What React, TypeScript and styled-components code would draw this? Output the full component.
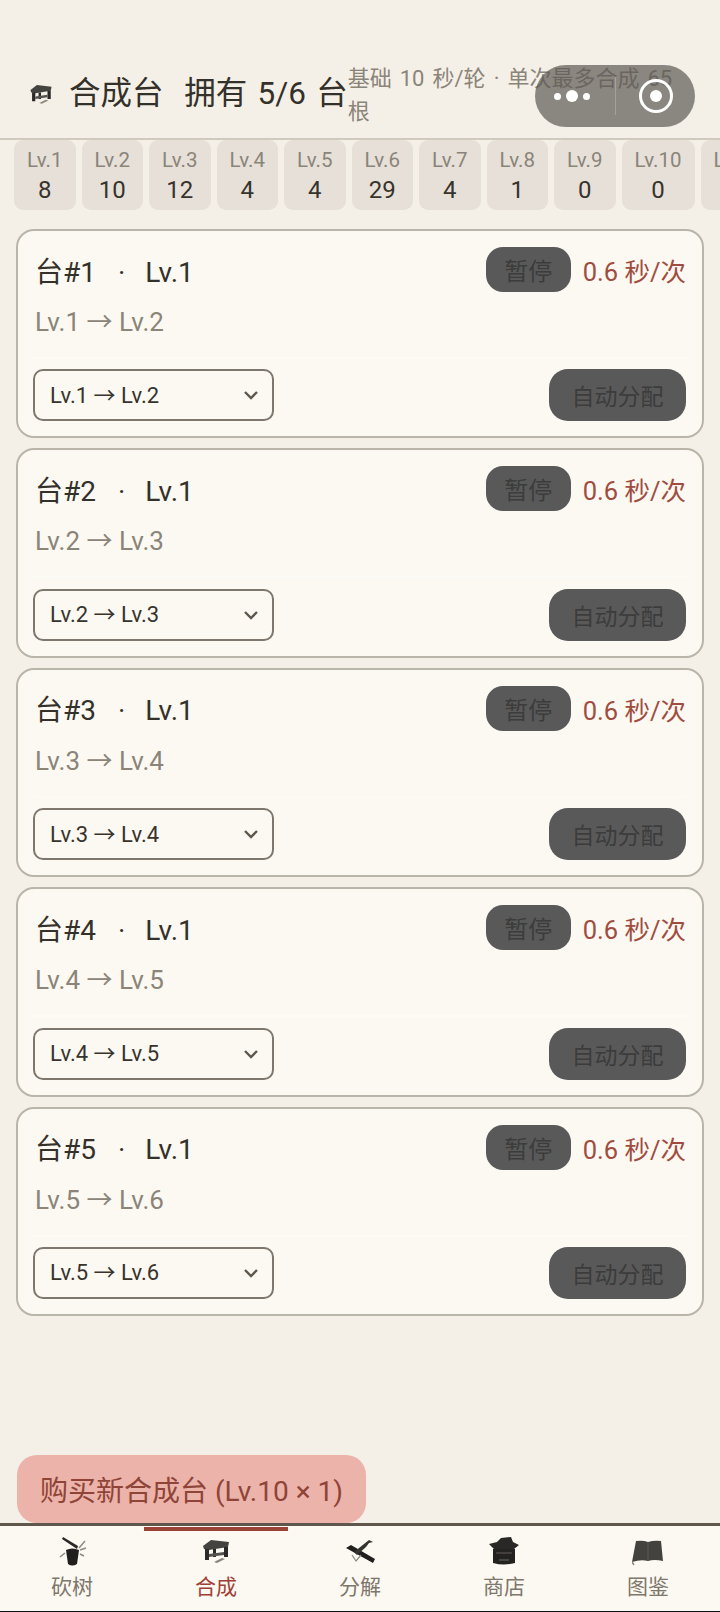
import React from "react";
import styled, { createGlobalStyle } from "styled-components";

const Global = createGlobalStyle`
  html, body { margin: 0; padding: 0; height: 1612px; background: #f4f0e8; }
  #root { height: 1612px; }
  * { box-sizing: border-box; }
  body { font-family: Roboto, "Noto Sans CJK SC", sans-serif; overflow: hidden; }
`;

const Page = styled.div`
  position: relative;
  width: 720px;
  height: 1612px;
  display: flex;
  flex-direction: column;
  background: #f4f0e8;
  border-bottom: 1px solid #111;
`;

const Header = styled.header`
  height: 140px;
  flex: none;
  padding: 64px 24px 0 28px;
  display: flex;
  align-items: flex-start;
  border-bottom: 2px solid #cfc9be;
`;

const TitleIcon = styled.span`
  width: 26px;
  height: 26px;
  margin-top: 17px;
  flex: none;
  display: block;
`;

const Title = styled.h1`
  margin: 1px 0 0 15px;
  flex: none;
  font-size: 31.5px;
  font-weight: 400;
  line-height: 58px;
  word-spacing: 2.5px;
  color: #34302a;
  white-space: pre;
`;

const Subtitle = styled.p`
  margin: -2px 0 0 0;
  font-size: 22px;
  line-height: 33px;
  word-spacing: 2.6px;
  color: #8b8479;
`;

const Capsule = styled.div`
  position: absolute;
  left: 535px;
  top: 65px;
  width: 160px;
  height: 62px;
  border-radius: 31px;
  background: rgba(92, 90, 84, 0.7);
  display: flex;
  align-items: center;
`;

const Dots = styled.div`
  width: 80px;
  padding-right: 6px;
  display: flex;
  align-items: center;
  justify-content: center;
  gap: 5px;
`;

const Dot = styled.i<{ $big?: boolean }>`
  display: block;
  width: ${(p) => (p.$big ? 12 : 7)}px;
  height: ${(p) => (p.$big ? 12 : 7)}px;
  border-radius: 50%;
  background: #fff;
`;

const Divider = styled.div`
  width: 1px;
  height: 38px;
  background: rgba(255, 255, 255, 0.22);
`;

const Ring = styled.div`
  margin-left: 23px;
  width: 34px;
  height: 34px;
  border: 3px solid #fff;
  border-radius: 50%;
  display: flex;
  align-items: center;
  justify-content: center;
  &::after {
    content: "";
    width: 12px;
    height: 12px;
    border-radius: 50%;
    background: #fff;
  }
`;

const Strip = styled.div`
  flex: none;
  height: 71px;
  padding: 0 0 1px 14px;
  display: flex;
  gap: 6px;
  overflow: hidden;
`;

const Chip = styled.div`
  flex: none;
  padding: 8px 13px 0;
  height: 70px;
  border-radius: 9px;
  background: #e6e0d8;
  text-align: center;
`;

const ChipLabel = styled.div`
  font-size: 20.5px;
  line-height: 24px;
  color: #8b8479;
`;

const ChipValue = styled.div`
  margin-top: 2px;
  font-size: 24px;
  line-height: 32px;
  color: #37332d;
`;

const List = styled.main`
  flex: none;
  padding: 18px 16px 0 16px;
  display: flex;
  flex-direction: column;
  gap: 10px;
`;

const Card = styled.section`
  height: 209.4px;
  padding: 16px 16px 15px 15px;
  border: 2px solid #bab5aa;
  border-radius: 18px;
  background: #fcf9f2;
  display: flex;
  flex-direction: column;
`;

const TopRow = styled.div`
  display: flex;
  align-items: center;
  height: 45px;
`;

const CardTitle = styled.div`
  flex: 1;
  font-size: 28px;
  padding-left: 2px;
  color: #34302a;
  white-space: pre;
`;

const TitleSep = styled.span`
  margin: 0 20px 0 22px;
`;

const PauseButton = styled.div`
  width: 85px;
  height: 45px;
  border-radius: 17px;
  background: #595959;
  color: #3c3c3c;
  font-size: 24px;
  display: flex;
  align-items: center;
  justify-content: center;
`;

const Speed = styled.div`
  margin-left: 12px;
  font-size: 25.5px;
  color: #a04c40;
`;

const Recipe = styled.div`
  margin-top: 11px;
  padding-left: 2px;
  font-size: 26px;
  line-height: 38px;
  color: #8b8479;
`;

const Track = styled.div`
  margin-top: 16px;
  height: 2px;
  background: #fdfbf6;
`;

const BottomRow = styled.div`
  margin-top: auto;
  display: flex;
  align-items: center;
  justify-content: space-between;
`;

const SelectWrap = styled.div`
  position: relative;
  width: 241px;
  height: 52px;
`;

const Select = styled.select`
  width: 100%;
  height: 100%;
  appearance: none;
  padding: 0 0 0 15px;
  border: 2px solid #7d776d;
  border-radius: 10px;
  background: transparent;
  color: #37332d;
  font: 22px Roboto, "Noto Sans CJK SC", sans-serif;
`;

const Chevron = styled.svg`
  position: absolute;
  right: 15px;
  top: 20px;
  width: 16px;
  height: 12px;
  pointer-events: none;
`;

const AutoButton = styled.div`
  width: 137px;
  height: 52px;
  border-radius: 19px;
  background: #595959;
  color: #3c3c3c;
  font-size: 23px;
  display: flex;
  align-items: center;
  justify-content: center;
`;

const Spacer = styled.div`
  flex: 1;
`;

const BuyButton = styled.div`
  flex: none;
  width: 349px;
  height: 68px;
  margin-left: 17px;
  border-radius: 20px;
  background: #ebb3a9;
  color: #8f4438;
  font-size: 28px;
  display: flex;
  align-items: center;
  justify-content: center;
`;

const TabBar = styled.nav`
  flex: none;
  height: 88px;
  border-top: 3px solid #5f574b;
  background: #fcf9f2;
  display: grid;
  grid-template-columns: repeat(5, 144px);
`;

const Tab = styled.div<{ $active?: boolean }>`
  position: relative;
  display: flex;
  flex-direction: column;
  align-items: center;
  padding-top: 9px;
  font-size: 21px;
  line-height: 30px;
  color: ${(p) => (p.$active ? "#a04034" : "#7e776c")};
  &::before {
    content: "";
    display: ${(p) => (p.$active ? "block" : "none")};
    position: absolute;
    top: 1px;
    left: 0;
    right: 0;
    height: 4px;
    background: #9c4338;
  }
`;

const TabIcon = styled.svg`
  display: block;
  width: 32px;
  height: 32px;
  margin-bottom: 5px;
`;

const TableArt = () => (
  <g>
    <path d="M3 11 L11 5 L29 7 L28 12 L9 15 L4 14 Z" fill="#45433f" />
    <path d="M5 14 h4 v11 h-4 Z M24 12 h4 v10 h-4 Z M13 14 h3 v8 h-3 Z" fill="#2b2a28" />
    <path d="M9 19 L24 17 L24 20 L9 22 Z" fill="#55534f" />
    <path d="M14 27 L22 23 L25 24 L17 28 Z" fill="#8a867e" />
  </g>
);

const AxeArt = () => (
  <g>
    <path d="M7 2 L22 11 L21 14 L6 4 Z" fill="#2a2826" />
    <path d="M10 15 Q16 12 23 15 L21 29 Q16 32 12 29 Z" fill="#201f1d" />
    <path d="M23 13 L29 6 M24 15 L30 13 M24 19 L28 21 M9 18 L4 22" stroke="#8c8a86" strokeWidth="1.5" />
  </g>
);

const ToolsArt = () => (
  <g>
    <path d="M2 13 L7 10 L31 24 L29 28 Z" fill="#201f1d" />
    <path d="M10 17 L20 9 L25 5 L29 7 L25 8 L22 12 L13 20 Z" fill="#35332f" />
    <path d="M8 20 L12 26 L17 20" fill="none" stroke="#8c8a86" strokeWidth="1.2" />
  </g>
);

const HouseArt = () => (
  <g>
    <path d="M1 9 L9 7 L13 3 L23 2 L25 7 L31 10 L26 14 L6 14 Z" fill="#2a2826" />
    <path d="M5 14 H27 V28 Q16 31 5 28 Z" fill="#232220" />
    <path d="M8 18 H24" stroke="#55534f" strokeWidth="1.2" />
    <path d="M11 25 H21" stroke="#55534f" strokeWidth="1.5" />
  </g>
);

const BookArt = () => (
  <g>
    <path d="M4 6 Q11 5 16 7 Q22 5 29 6 L31 26 Q22 24 16 26 Q9 24 0 27 Z" fill="#44423f" />
    <path d="M16 7 V25" stroke="#5d5a55" strokeWidth="1" />
    <path d="M0 27 L2 30" stroke="#8c8a86" strokeWidth="1.5" />
  </g>
);

const chips: [string, number][] = [
  ["Lv.1", 8], ["Lv.2", 10], ["Lv.3", 12], ["Lv.4", 4], ["Lv.5", 4], ["Lv.6", 29],
  ["Lv.7", 4], ["Lv.8", 1], ["Lv.9", 0], ["Lv.10", 0], ["Lv.11", 0],
];

const tabs = [
  { label: "砍树", art: <AxeArt /> },
  { label: "合成", art: <TableArt />, active: true },
  { label: "分解", art: <ToolsArt /> },
  { label: "商店", art: <HouseArt /> },
  { label: "图鉴", art: <BookArt /> },
];

export default function App() {
  return (
    <Page>
      <Global />
      <Header>
        <TitleIcon>
          <svg viewBox="0 0 32 32" width="26" height="26"><TableArt /></svg>
        </TitleIcon>
        <Title>合成台  拥有 5/6 台</Title>
        <Subtitle>基础 10 秒/轮 · 单次最多合成 65 根</Subtitle>
      </Header>
      <Strip>
        {chips.map(([label, value]) => (
          <Chip key={label}>
            <ChipLabel>{label}</ChipLabel>
            <ChipValue>{value}</ChipValue>
          </Chip>
        ))}
      </Strip>
      <List>
        {[1, 2, 3, 4, 5].map((n) => {
          const recipe = `Lv.${n} → Lv.${n + 1}`;
          return (
            <Card key={n}>
              <TopRow>
                <CardTitle>
                  {`台#${n}`}
                  <TitleSep>·</TitleSep>
                  Lv.1
                </CardTitle>
                <PauseButton>暂停</PauseButton>
                <Speed>0.6 秒/次</Speed>
              </TopRow>
              <Recipe>{recipe}</Recipe>
              <Track />
              <BottomRow>
                <SelectWrap>
                  <Select defaultValue={recipe}>
                    <option>{recipe}</option>
                  </Select>
                  <Chevron viewBox="0 0 16 12">
                    <path d="M2 3 L8 9 L14 3" fill="none" stroke="#5d574d" strokeWidth="2.4" />
                  </Chevron>
                </SelectWrap>
                <AutoButton>自动分配</AutoButton>
              </BottomRow>
            </Card>
          );
        })}
      </List>
      <Spacer />
      <BuyButton>购买新合成台 (Lv.10 × 1)</BuyButton>
      <TabBar>
        {tabs.map((t) => (
          <Tab key={t.label} $active={t.active}>
            <TabIcon viewBox="0 0 32 32">{t.art}</TabIcon>
            {t.label}
          </Tab>
        ))}
      </TabBar>
      <Capsule>
        <Dots>
          <Dot />
          <Dot $big />
          <Dot />
        </Dots>
        <Divider />
        <Ring />
      </Capsule>
    </Page>
  );
}
